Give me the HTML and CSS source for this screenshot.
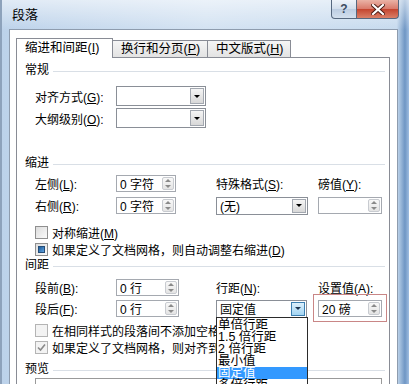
FILE: index.html
```html
<!DOCTYPE html>
<html lang="zh-CN">
<head>
    <meta charset="UTF-8">
    <title>段落</title>
    <link rel="stylesheet" href="styles.css">
</head>
<body>
    <div class="window">
        <!-- bara de titlu -->
        <div class="titlebar">
            <span class="title">段落</span>
            <div class="caption">
                <div class="cap-btn help">?</div>
                <div class="cap-btn close">
                    <svg width="14" height="11" viewBox="0 0 14 11">
                        <path d="M2 1 L12 10 M12 1 L2 10" stroke="#4a1a12" stroke-width="4" stroke-linecap="square"/>
                        <path d="M2 1 L12 10 M12 1 L2 10" stroke="#fff" stroke-width="2.2" stroke-linecap="square"/>
                    </svg>
                </div>
            </div>
        </div>

        <div class="client">
            <div class="tabs">
                <div class="tab active t1">缩进和间距(<u>I</u>)</div>
                <div class="tab t2">换行和分页(<u>P</u>)</div>
                <div class="tab t3">中文版式(<u>H</u>)</div>
            </div>

            <div class="panel">
                <div class="group g-general">常规</div>
                <div class="row r-big first">
                    <span class="lbl">对齐方式(<u>G</u>):</span>
                    <div class="combo w90"><span class="val"></span><span class="drop"></span></div>
                </div>
                <div class="row r-big">
                    <span class="lbl">大纲级别(<u>O</u>):</span>
                    <div class="combo w90"><span class="val"></span><span class="drop"></span></div>
                </div>

                <div class="group g-indent">缩进</div>
                <div class="row r-mid first">
                    <span class="lbl">左侧(<u>L</u>):</span>
                    <div class="c2"><div class="spin w60"><span class="val">0 字符</span><span class="updn"></span></div></div>
                    <div class="c3">特殊格式(<u>S</u>):</div>
                    <div class="c4">磅值(<u>Y</u>):</div>
                </div>
                <div class="row r-mid second">
                    <span class="lbl">右侧(<u>R</u>):</span>
                    <div class="c2"><div class="spin w60"><span class="val">0 字符</span><span class="updn"></span></div></div>
                    <div class="c3"><div class="combo sm w92"><span class="val">(无)</span><span class="drop"></span></div></div>
                    <div class="c4"><div class="spin w64"><span class="val"></span><span class="updn"></span></div></div>
                </div>
                <div class="row r-check first-check">
                    <span class="box"></span>
                    <span>对称缩进(<u>M</u>)</span>
                </div>
                <div class="row r-check">
                    <span class="box mixed"></span>
                    <span>如果定义了文档网格，则自动调整右缩进(<u>D</u>)</span>
                </div>

                <div class="group">间距</div>
                <div class="row r-mid spacing-first">
                    <span class="lbl">段前(<u>B</u>):</span>
                    <div class="c2"><div class="spin w63"><span class="val">0 行</span><span class="updn"></span></div></div>
                    <div class="c3">行距(<u>N</u>):</div>
                    <div class="c4">设置值(<u>A</u>):</div>
                </div>
                <div class="row r-mid">
                    <span class="lbl">段后(<u>F</u>):</span>
                    <div class="c2"><div class="spin w63"><span class="val">0 行</span><span class="updn"></span></div></div>
                    <div class="c3">
                        <div class="combo sm w91 open">
                            <span class="val">固定值</span><span class="drop on"></span>
                            <div class="list">
                                <div>单倍行距</div>
                                <div>1.5 倍行距</div>
                                <div>2 倍行距</div>
                                <div>最小值</div>
                                <div class="sel">固定值</div>
                                <div>多倍行距</div>
                            </div>
                        </div>
                    </div>
                    <div class="c4"><div class="spin w64 mark"><span class="val">20 磅</span><span class="updn"></span></div></div>
                </div>
                <div class="row r-check second-check">
                    <span class="box off"></span>
                    <span>在相同样式的段落间不添加空格(<u>C</u>)</span>
                </div>
                <div class="row r-check">
                    <span class="box off checked">
                        <svg width="9" height="9" viewBox="0 0 9 9"><path d="M1 4.5 L3.5 7 L8 1.5" fill="none" stroke="#8a8a8a" stroke-width="1.6"/></svg>
                    </span>
                    <span>如果定义了文档网格，则对齐到网格(<u>W</u>)</span>
                </div>

                <div class="group g-preview">预览</div>
                <div class="preview"></div>
            </div>
        </div>
    </div>
</body>
</html>
```

FILE: styles.css
```css
/* fereastra de dialog */
body {
    margin: 0;
    font-family: "Liberation Sans", "Noto Sans CJK SC", sans-serif;
    font-size: 12px;
    color: #000;
    overflow: hidden;
}
.window {
    width: 409px;
    height: 384px;
    box-sizing: border-box;
    padding: 0 11px 0 7px;
    display: flex;
    flex-direction: column;
    overflow: hidden;
    border-left: 2px solid #8da2bb;
    background:
        linear-gradient(to bottom, rgba(255, 255, 255, 0.55), rgba(255, 255, 255, 0) 30px),
        linear-gradient(to right, #bcd2ea 0, #d3e2f2 50%, #c6daee 97%, #6f96c4 99%, #9fbde0 100%);
}
.titlebar {
    height: 29px;
    flex: none;
    display: flex;
    justify-content: space-between;
    align-items: flex-start;
}
.title {
    padding: 8px 0 0 3px;
    line-height: 14px;
    font-size: 13px;
}
.caption {
    display: flex;
    margin-right: -1px;
}
.cap-btn {
    height: 19px;
    box-sizing: border-box;
    border: 1px solid #56687f;
    border-top: none;
    display: flex;
    align-items: center;
    justify-content: center;
}
.help {
    width: 26px;
    border-radius: 0 0 0 4px;
    color: #3b4b60;
    font-weight: bold;
    font-size: 12px;
    background: linear-gradient(#eef3f9, #d2deec 50%, #bccde2 51%, #d3e0ee);
}
.close {
    width: 42px;
    border-left: none;
    border-radius: 0 0 4px 0;
    background: linear-gradient(#eab3a6, #d9796a 50%, #c4452f 51%, #da8068);
}

/* zona client si taburi */
.client {
    flex: 1;
    border: 1px solid #8e9cae;
    border-bottom: none;
    background: #fff;
    padding: 8px 7px 0 6px;
    display: flex;
    flex-direction: column;
}
.tabs {
    display: flex;
    align-items: flex-end;
    height: 19px;
    flex: none;
}
.tab {
    height: 17px;
    box-sizing: border-box;
    border: 1px solid #898c95;
    border-bottom: none;
    background: linear-gradient(#f5f5f5, #e3e3e3);
    padding-left: 8px;
    line-height: 16px;
    margin-left: -1px;
    font-size: 12.5px;
}
.tab.active {
    height: 20px;
    line-height: 18px;
    background: #fff;
    margin-bottom: -1px;
    margin-left: 0;
    position: relative;
    z-index: 1;
}
.t1 { width: 97px; }
.t2 { width: 96px; }
.t3 { width: 84px; }
.panel {
    flex: 1;
    border: 1px solid #898c95;
    border-bottom: none;
    background: #fff;
    padding: 0 4px 0 8px;
}

/* grupuri */
.group {
    display: flex;
    align-items: center;
    height: 14px;
    line-height: 14px;
}
.group::after {
    content: "";
    flex: 1;
    border-top: 1px solid #d9dfe6;
    margin: 2px 0 0 4px;
}
.g-general { margin-top: 5px; }
.g-indent { margin-top: 27px; }
.g-preview { margin-top: 6px; }

.row {
    display: flex;
    align-items: center;
    margin-left: 10px;
}
.r-big { height: 22px; }
.r-big.first { margin-top: 8px; }
.r-mid { height: 21px; }
.r-mid.first { margin-top: 3px; }
.r-mid.second { margin-top: 1px; }
.spacing-first { margin-top: 5px; }
.r-check { height: 17px; }
.first-check { margin-top: 8px; }
.second-check { margin-top: 3px; }
.lbl { width: 81px; }
.c2 { width: 100px; }
.c3 { width: 102px; }

/* controale */
.spin, .combo {
    box-sizing: border-box;
    border: 1px solid #a5a9b0;
    background: #fff;
    display: flex;
    align-items: center;
    justify-content: space-between;
    padding-left: 3px;
}
.spin { height: 17px; }
.combo { height: 20px; border-color: #8a8f97; }
.combo.sm { height: 18px; }
.w60 { width: 60px; }
.w63 { width: 63px; }
.w64 { width: 64px; }
.w90 { width: 90px; }
.w91 { width: 91px; }
.w92 { width: 92px; }
.updn {
    width: 12px;
    height: 13px;
    margin-right: 1px;
    box-sizing: border-box;
    border: 1px solid #c8cbd0;
    border-radius: 2px;
    background: linear-gradient(#f8f8f8, #e4e4e4);
    display: flex;
    flex-direction: column;
    align-items: center;
    justify-content: center;
    gap: 3px;
}
.updn::before {
    content: "";
    border-left: 3px solid transparent;
    border-right: 3px solid transparent;
    border-bottom: 3px solid #8a8a8a;
}
.updn::after {
    content: "";
    border-left: 3px solid transparent;
    border-right: 3px solid transparent;
    border-top: 3px solid #8a8a8a;
}
.drop {
    width: 14px;
    height: calc(100% - 2px);
    margin-right: 1px;
    box-sizing: border-box;
    border: 1px solid #a3a8b0;
    background: linear-gradient(#f5f5f5, #d8d8d8);
    display: flex;
    align-items: center;
    justify-content: center;
}
.drop::after {
    content: "";
    border-left: 3px solid transparent;
    border-right: 3px solid transparent;
    border-top: 3px solid #000;
}
.drop.on {
    background: linear-gradient(#dcf0fc, #a2d4f2);
    border-color: #3c7fb1;
}
.drop.on::after { border-top-color: #1d3550; }

/* cadrul rosu de evidentiere */
.mark { position: relative; }
.mark::after {
    content: "";
    position: absolute;
    left: -6px;
    right: -6px;
    top: -7px;
    bottom: -6px;
    border: 1px solid #c98686;
}

/* lista derulanta deschisa */
.combo.open { position: relative; }
.list {
    position: absolute;
    top: 100%;
    left: -1px;
    width: 92px;
    box-sizing: border-box;
    border: 1px solid #2b2b2b;
    border-bottom: none;
    background: #fff;
    padding-top: 1px;
    z-index: 5;
    font-size: 12.5px;
}
.list div {
    height: 12.2px;
    line-height: 12px;
    padding-left: 1px;
    white-space: nowrap;
}
.list .sel {
    background: #3399ff;
    color: #fff;
}

/* casute de bifat */
.box {
    width: 13px;
    height: 13px;
    flex: none;
    box-sizing: border-box;
    border: 1px solid #8f8f8f;
    background: linear-gradient(135deg, #dcdcdc, #fafafa);
    margin-right: 4px;
    position: relative;
    display: flex;
    align-items: center;
    justify-content: center;
}
.box.mixed::after {
    content: "";
    position: absolute;
    inset: 2px;
    background: linear-gradient(135deg, #1c5a98, #5fa3e0);
    border: 1px solid #244d78;
    box-sizing: border-box;
}
.box.off {
    border-color: #b4b4b4;
    background: #f3f3f3;
}
.preview {
    margin: 2px 3px 0 10px;
    height: 30px;
    border: 1px solid #9a9a9a;
}
```
